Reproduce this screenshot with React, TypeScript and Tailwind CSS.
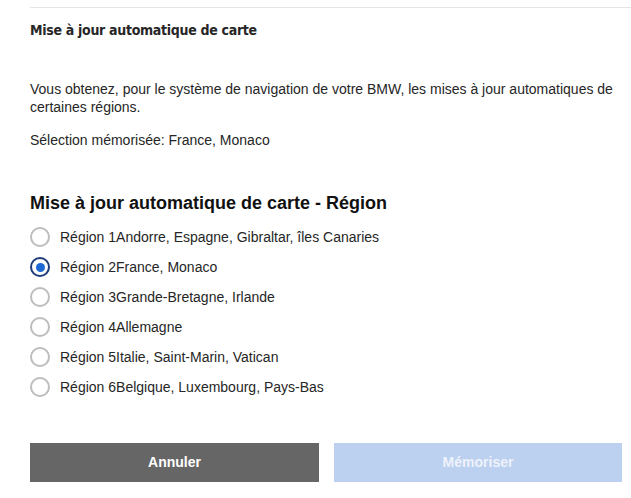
import React, { useState } from "react";

const regions = [
  { id: 1, label: "Région 1", countries: "Andorre, Espagne, Gibraltar, îles Canaries" },
  { id: 2, label: "Région 2", countries: "France, Monaco" },
  { id: 3, label: "Région 3", countries: "Grande-Bretagne, Irlande" },
  { id: 4, label: "Région 4", countries: "Allemagne" },
  { id: 5, label: "Région 5", countries: "Italie, Saint-Marin, Vatican" },
  { id: 6, label: "Région 6", countries: "Belgique, Luxembourg, Pays-Bas" },
];

const RadioRow = ({ region, checked, onSelect }) => (
  <label
    className="flex items-center h-[30px] cursor-pointer"
    onClick={() => onSelect(region.id)}
  >
    <span
      className={`w-[20px] h-[20px] rounded-full flex items-center justify-center shrink-0 ${
        checked ? "border-2 border-[#1d3a79]" : "border-2 border-[#bdbdbd]"
      }`}
    >
      {checked && <span className="w-[9px] h-[9px] rounded-full bg-[#1c69d4]" />}
    </span>
    <span className="ml-[10px] text-[14px] text-[#262626]">
      {region.label}
      {region.countries}
    </span>
  </label>
);

export default function App() {
  const [selected, setSelected] = useState(2);

  return (
    <div className="w-[631px] h-[498px] bg-white overflow-hidden font-['Liberation_Sans',Arial,sans-serif]">
      <div className="pl-[30px] pt-[7px]">
        <div className="border-t border-[#e4e4e4]" />

        <h2 className="mt-[12px] text-[14px] font-bold text-[#262626] tracking-[-0.3px] font-['DejaVu_Sans_Condensed','Liberation_Sans',sans-serif]">
          Mise à jour automatique de carte
        </h2>

        <div className="mt-[39px] pr-[18px] text-[14px] leading-[18px] text-[#262626]">
          <p>
            Vous obtenez, pour le système de navigation de votre BMW, les mises à jour automatiques de
            certaines régions.
          </p>
          <p className="mt-[15px]">Sélection mémorisée: France, Monaco</p>
        </div>

        <h3 className="mt-[42px] text-[18px] font-bold leading-[24px] text-[#111]">
          Mise à jour automatique de carte - Région
        </h3>

        <div className="mt-[7px] flex flex-col">
          {regions.map((r) => (
            <RadioRow
              key={r.id}
              region={r}
              checked={selected === r.id}
              onSelect={setSelected}
            />
          ))}
        </div>

        <div className="mt-[41px] flex gap-[15px] pr-[9px]">
          <button className="w-[289px] h-[39px] bg-[#666666] text-white text-[14px] font-bold">
            Annuler
          </button>
          <button className="w-[288px] h-[39px] bg-[#bcd0ef] text-[#eef3fb] text-[14px] font-bold">
            Mémoriser
          </button>
        </div>
      </div>
    </div>
  );
}
